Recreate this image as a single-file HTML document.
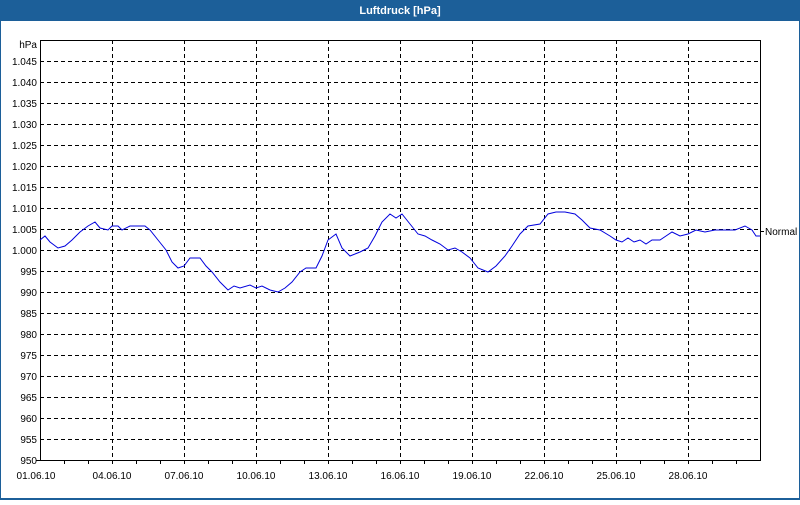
<!DOCTYPE html>
<html><head><meta charset="utf-8"><style>
body{margin:0;width:800px;height:500px;overflow:hidden;background:#fff;font-family:"Liberation Sans",sans-serif}
</style></head><body>
<svg width="800" height="500" xmlns="http://www.w3.org/2000/svg" font-family="Liberation Sans, sans-serif">
<rect x="0" y="0" width="800" height="500" fill="#1c5f99"/>
<rect x="1" y="21" width="798" height="477" fill="#fff"/>
<text x="400" y="14" fill="#fff" font-size="11" font-weight="bold" text-anchor="middle">Luftdruck [hPa]</text>
<g stroke="#000" stroke-dasharray="4,3" stroke-width="1">
<path d="M40 61.5H760M40 82.5H760M40 103.5H760M40 124.5H760M40 145.5H760M40 166.5H760M40 187.5H760M40 208.5H760M40 229.5H760M40 250.5H760M40 271.5H760M40 292.5H760M40 313.5H760M40 334.5H760M40 355.5H760M40 376.5H760M40 397.5H760M40 418.5H760M40 439.5H760"/>
<path d="M112.5 40V460M184.5 40V460M256.5 40V460M328.5 40V460M400.5 40V460M472.5 40V460M544.5 40V460M616.5 40V460M688.5 40V460"/>
</g>
<path d="M40.5 40V460.5H760.5V40M40 40.5H760" stroke="#000" fill="none"/>
<path d="M64.5 460v4M88.5 460v4M112.5 460v4M136.5 460v4M160.5 460v4M184.5 460v4M208.5 460v4M232.5 460v4M256.5 460v4M280.5 460v4M304.5 460v4M328.5 460v4M352.5 460v4M376.5 460v4M400.5 460v4M424.5 460v4M448.5 460v4M472.5 460v4M496.5 460v4M520.5 460v4M544.5 460v4M568.5 460v4M592.5 460v4M616.5 460v4M640.5 460v4M664.5 460v4M688.5 460v4M712.5 460v4M736.5 460v4M36 460.5h4M760 231.5h4" stroke="#000"/>
<g font-size="10" fill="#000" text-anchor="end">
<text x="37" y="48">hPa</text>
<text x="37" y="65">1.045</text><text x="37" y="86">1.040</text><text x="37" y="107">1.035</text><text x="37" y="128">1.030</text><text x="37" y="149">1.025</text><text x="37" y="170">1.020</text><text x="37" y="191">1.015</text><text x="37" y="212">1.010</text><text x="37" y="233">1.005</text><text x="37" y="254">1.000</text><text x="37" y="275">995</text><text x="37" y="296">990</text><text x="37" y="317">985</text><text x="37" y="338">980</text><text x="37" y="359">975</text><text x="37" y="380">970</text><text x="37" y="401">965</text><text x="37" y="422">960</text><text x="37" y="443">955</text><text x="37" y="464">950</text>
</g>
<g font-size="10" fill="#000" text-anchor="middle">
<text x="36" y="479">01.06.10</text><text x="112" y="479">04.06.10</text><text x="184" y="479">07.06.10</text><text x="256" y="479">10.06.10</text><text x="328" y="479">13.06.10</text><text x="400" y="479">16.06.10</text><text x="472" y="479">19.06.10</text><text x="544" y="479">22.06.10</text><text x="616" y="479">25.06.10</text><text x="688" y="479">28.06.10</text>
</g>
<text x="765" y="235" font-size="10" fill="#000">Normal</text>
<polyline fill="none" stroke="#0000dd" stroke-width="1" points="40,240 45,236 50,242 58,248 65,246 72,240 80,232 88,226 95,222 100,228 108,230 112,226 118,226 122,230 130,226 145,226 150,230 158,240 166,250 172,262 178,268 184,266 190,258 200,258 206,266 212,272 220,282 228,290 234,286 240,288 250,285 256,288 262,286 270,290 278,292 285,288 292,282 300,272 306,268 316,268 322,256 328,240 336,234 342,248 350,256 360,252 368,248 375,236 382,222 390,214 396,218 402,214 410,224 418,234 425,236 432,240 440,244 448,250 455,248 462,252 470,258 478,268 488,272 496,266 505,256 512,246 520,234 528,226 540,224 548,214 556,212 565,212 575,214 582,220 590,228 600,230 610,236 616,240 622,242 628,238 634,242 640,240 646,244 652,240 660,240 666,236 672,232 680,236 688,234 696,230 705,232 715,230 725,230 735,230 745,226 752,230 756,236 760,236"/>
</svg>
</body></html>
